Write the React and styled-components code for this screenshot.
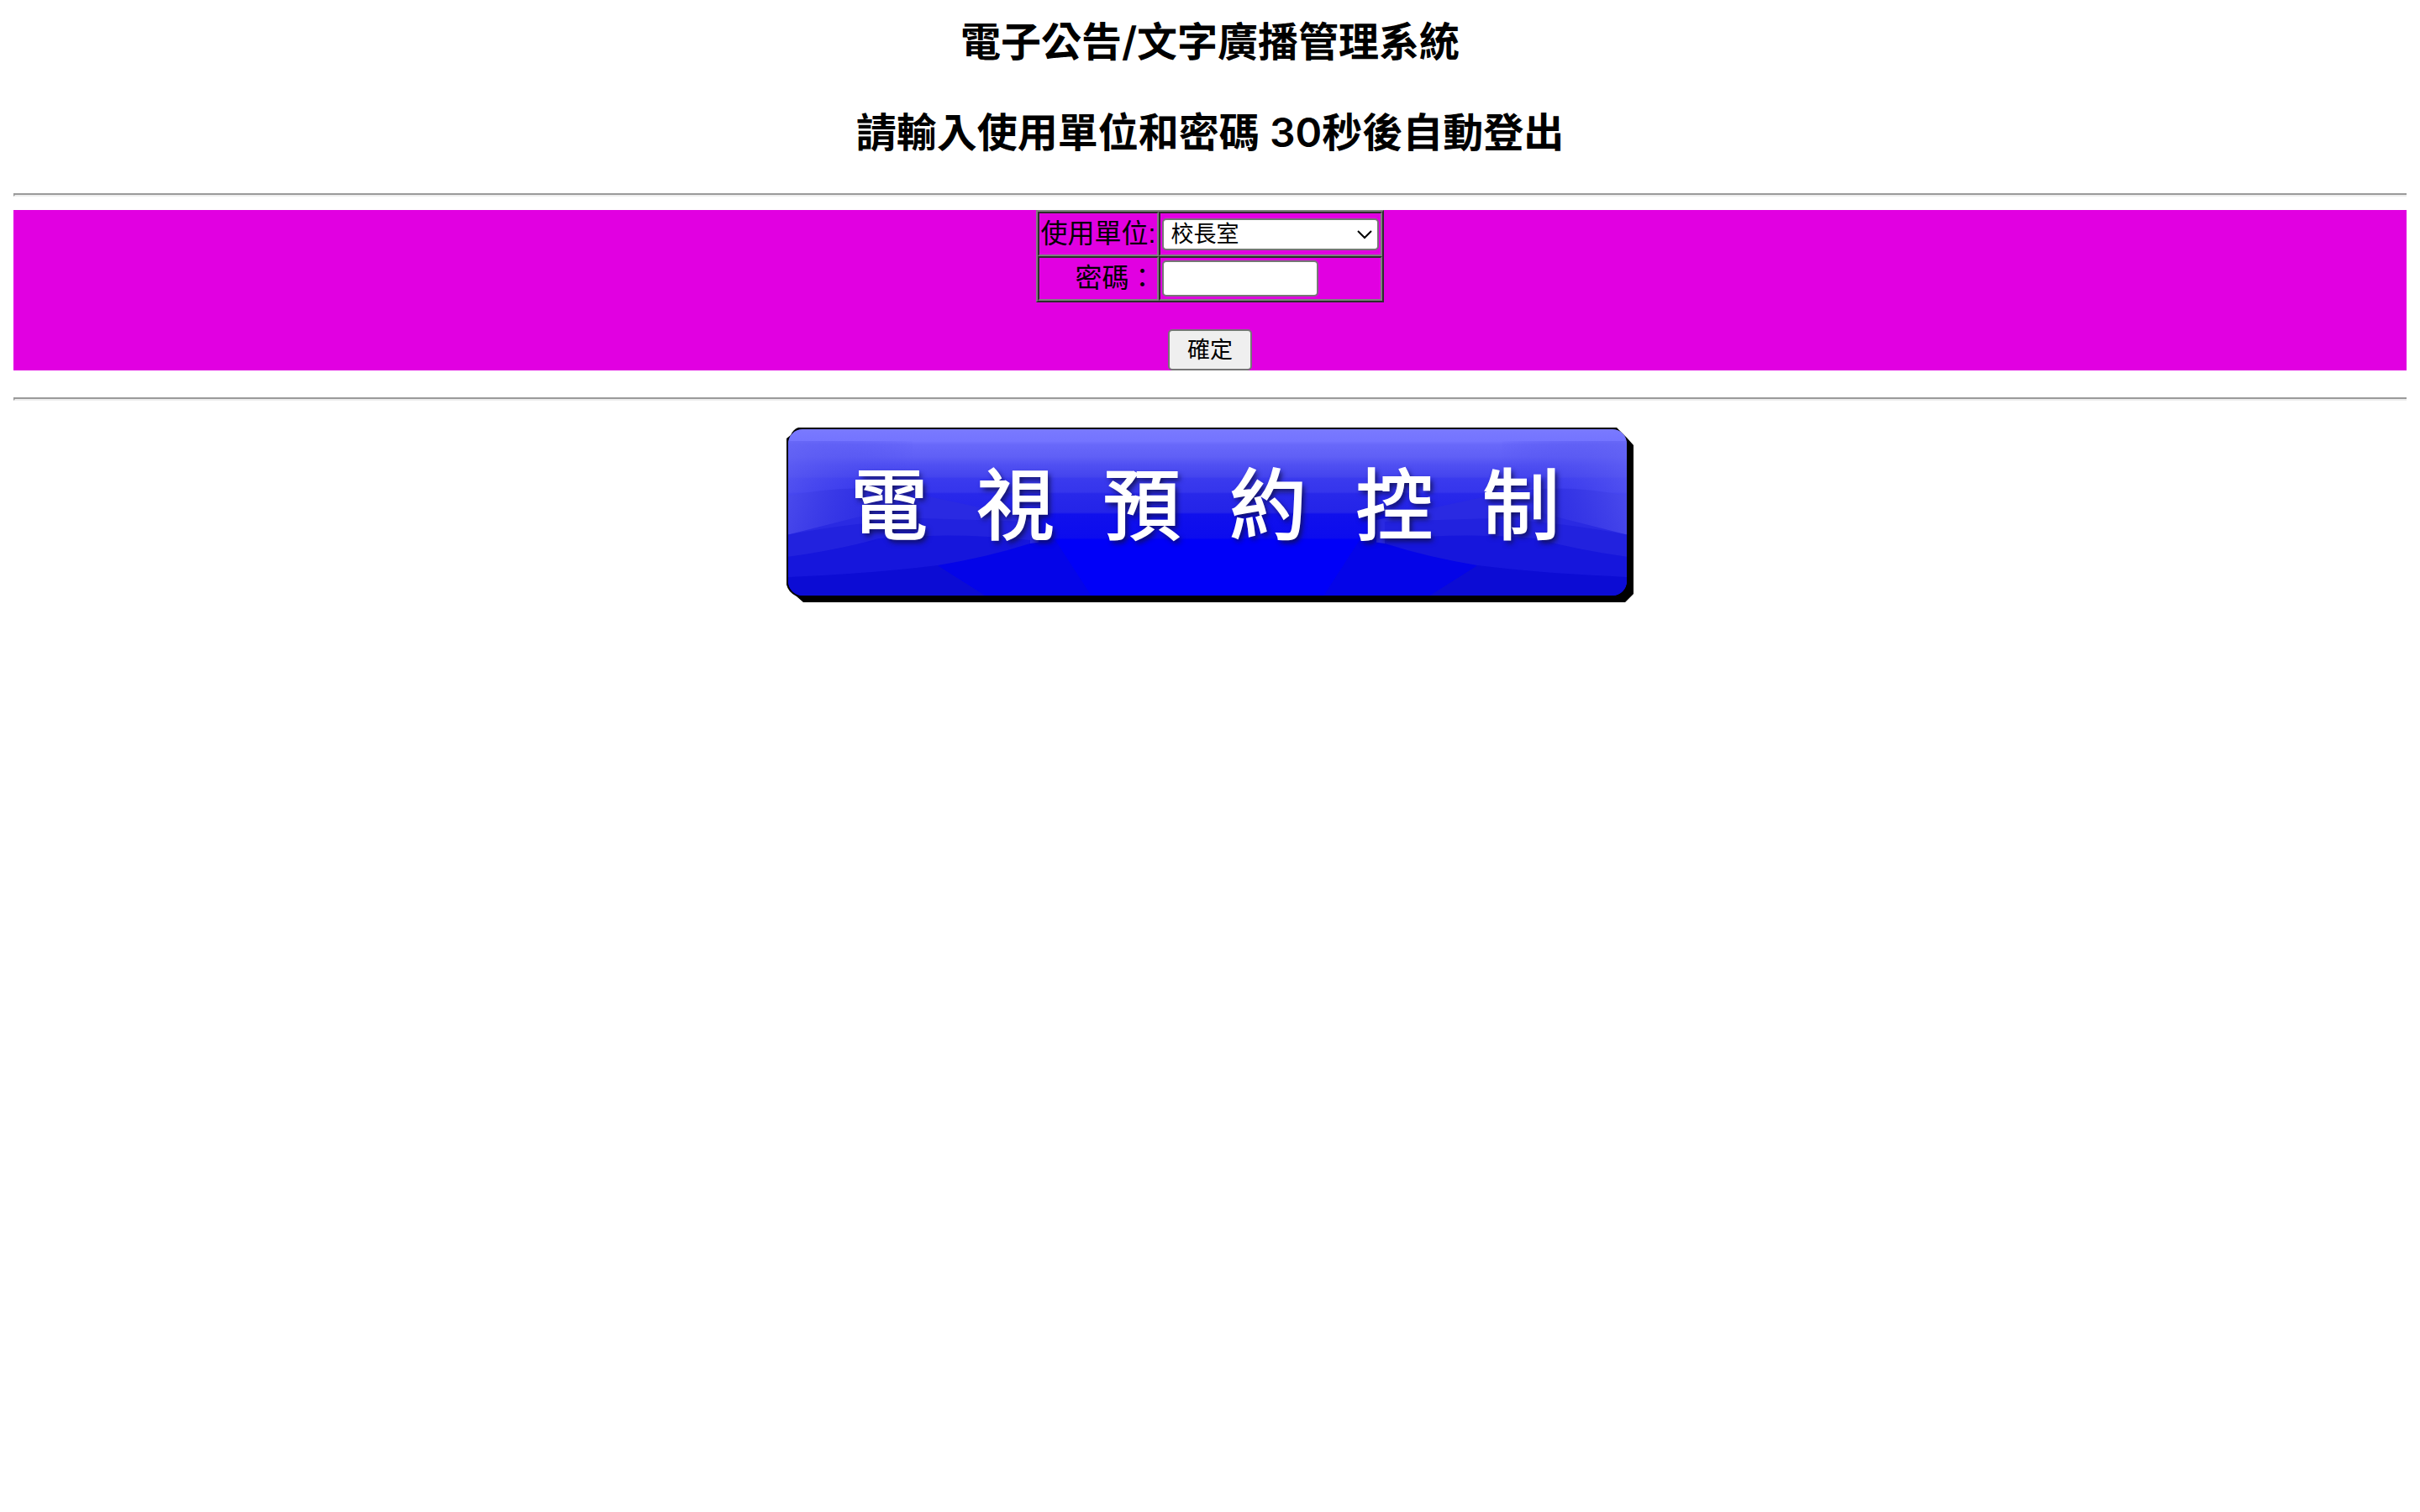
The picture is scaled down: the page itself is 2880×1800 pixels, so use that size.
import React from "react";
import styled, { createGlobalStyle } from "styled-components";

const sans = `"Liberation Sans", "Noto Sans CJK TC", sans-serif`;

const GlobalStyle = createGlobalStyle`
  body {
    margin: 14px 16px;
    background: #fff;
    color: #000;
    font: 32px/48px ${sans};
  }
`;

const Title = styled.h2`
  margin: 0 0 36px;
  font-family: Inter, "Noto Sans CJK TC", sans-serif;
  font-size: 48px;
  line-height: 72px;
  font-weight: 600;
  text-align: center;
`;

const Rule = styled.hr`
  box-sizing: content-box;
  width: 100%;
  height: 0;
  margin: 0;
  border: 2px solid;
  border-color: #9a9a9a #eee #eee #9a9a9a;
`;

const LoginForm = styled.form`
  display: flex;
  flex-direction: column;
  align-items: center;
  gap: 32px;
  margin: 16px 0 32px;
  background: #e100e1;
`;

const Fields = styled.table`
  border: 2px solid;
  border-color: #808080 #2c2c2c #2c2c2c #808080;
  border-collapse: separate;
  border-spacing: 0;
`;

const Cell = styled.td`
  height: 45px;
  padding: 2px;
  border: 2px solid;
  border-color: #2c2c2c #808080 #808080 #2c2c2c;
  line-height: 45px;
  text-align: ${(p) => p.$align || "left"};
  vertical-align: middle;
`;

const SelectBox = styled.div`
  display: grid;
  align-items: center;
  width: 258px;
  > * {
    grid-area: 1 / 1;
  }
`;

const Select = styled.select`
  appearance: none;
  width: 100%;
  height: 38px;
  margin: 0;
  padding: 0 8px;
  border: 2px solid #767676;
  border-radius: 5px;
  background: #fff;
  color: #000;
  font: 27px/34px ${sans};
`;

const Chevron = styled.svg`
  justify-self: end;
  width: 18px;
  height: 12px;
  margin-right: 8px;
  pointer-events: none;
`;

const Password = styled.input`
  display: block;
  box-sizing: border-box;
  width: 186px;
  height: 43px;
  padding: 2px 4px;
  border: 2px solid #767676;
  border-radius: 5px;
  background: #fff;
  font: 27px ${sans};
`;

const Submit = styled.button`
  height: 49px;
  width: 100px;
  padding: 0;
  border: 2px solid #767676;
  border-radius: 5px;
  background: #efefef;
  color: #000;
  font: 27px/40px ${sans};
`;

const Banner = styled.a`
  display: grid;
  width: 1008px;
  margin: 32px auto 0;
  color: #fff;
  text-decoration: none;
  > * {
    grid-area: 1 / 1;
  }
`;

const BannerText = styled.span`
  display: flex;
  justify-content: space-between;
  padding: 16px 88px 0 76px;
  font: 400 92px/140px "Noto Sans CJK TC", sans-serif;
  -webkit-text-stroke: 2px #fff;
  text-shadow: 3px 4px 6px #101050;
`;

function BannerArt() {
  return (
    <svg width="1008" height="208" viewBox="0 0 1008 208" aria-hidden="true">
      <defs>
        <linearGradient id="face" x1="0" y1="0" x2="0" y2="1">
          <stop offset="0" stopColor="#7a7aff" />
          <stop offset="0.08" stopColor="#7474ff" />
          <stop offset="0.1" stopColor="#6868fa" />
          <stop offset="0.17" stopColor="#6060f6" />
          <stop offset="0.22" stopColor="#5050f2" />
          <stop offset="0.29" stopColor="#4444ee" />
          <stop offset="0.3" stopColor="#3a3aee" />
          <stop offset="0.38" stopColor="#3535ec" />
          <stop offset="0.39" stopColor="#2828ea" />
          <stop offset="0.5" stopColor="#2424e8" />
          <stop offset="0.51" stopColor="#1010ec" />
          <stop offset="0.65" stopColor="#0c0cee" />
          <stop offset="0.66" stopColor="#0000f8" />
          <stop offset="1" stopColor="#0000f8" />
        </linearGradient>
        <linearGradient id="edge" x1="0" y1="0" x2="1" y2="0.25">
          <stop offset="0" stopColor="#6464f4" stopOpacity="0.7" />
          <stop offset="1" stopColor="#4040ea" stopOpacity="0" />
        </linearGradient>
        <clipPath id="faceClip">
          <rect x="2" y="2" width="998" height="198" rx="17" />
        </clipPath>
        <g id="side">
          <path d="M0 82Q80 64 160 80L300 110V150L0 170Z" fill="#2a2ae2" />
          <path d="M0 16H150V90L0 128Z" fill="url(#edge)" />
          <path d="M0 128Q70 114 160 108L290 112V150L0 160Z" fill="#2222de" />
          <path d="M0 154Q60 146 110 132Q200 124 290 134V144L180 166L0 186Z" fill="#1616dc" />
          <path d="M0 178Q100 174 180 164L240 202H0Z" fill="#0c0cd4" />
          <path d="M180 164Q240 154 290 138L320 134L364 202H240Z" fill="#0404e8" />
        </g>
      </defs>
      <path d="M14 0H988L1000 12L1008 21V198L998 208H20L12 201Q2 196 0 187V13L5 9Q8 2 14 0Z" fill="#000" />
      <g clipPath="url(#faceClip)">
        <rect width="1002" height="202" fill="url(#face)" />
        <use href="#side" />
        <use href="#side" transform="translate(1002 0) scale(-1 1)" />
      </g>
    </svg>
  );
}

export default function App() {
  return (
    <>
      <GlobalStyle />
      <Title>電子公告/文字廣播管理系統</Title>
      <Title>請輸入使用單位和密碼 30秒後自動登出</Title>
      <Rule />
      <LoginForm onSubmit={(e) => e.preventDefault()}>
        <Fields>
          <tbody>
            <tr>
              <Cell $align="right">
                <label htmlFor="unit">使用單位:</label>
              </Cell>
              <Cell>
                <SelectBox>
                  <Select id="unit">
                    <option>校長室</option>
                  </Select>
                  <Chevron viewBox="0 0 18 12" aria-hidden="true">
                    <path d="M1 2L9 10L17 2" fill="none" stroke="#000" strokeWidth="2" />
                  </Chevron>
                </SelectBox>
              </Cell>
            </tr>
            <tr>
              <Cell $align="right">
                <label htmlFor="password">密碼：</label>
              </Cell>
              <Cell>
                <Password id="password" type="password" />
              </Cell>
            </tr>
          </tbody>
        </Fields>
        <Submit type="submit">確定</Submit>
      </LoginForm>
      <Rule />
      <Banner href="#tv">
        <BannerArt />
        <BannerText>
          {[..."電視預約控制"].map((char) => (
            <span key={char}>{char}</span>
          ))}
        </BannerText>
      </Banner>
    </>
  );
}
